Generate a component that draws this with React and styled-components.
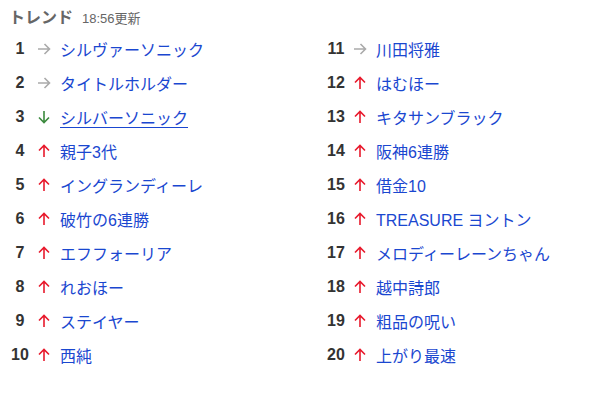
import React from 'react';
import styled, { createGlobalStyle } from 'styled-components';

const GlobalStyle = createGlobalStyle`
  body {
    margin: 0;
    background: #fff;
    font-family: "Liberation Sans", "Noto Sans CJK JP", sans-serif;
  }
`;

const Wrapper = styled.div`
  padding: 4px 8px 0;
  width: 592px;
  box-sizing: border-box;
`;

const Header = styled.div`
  display: flex;
  align-items: baseline;
  gap: 9px;
  padding-left: 1px;
  height: 22px;
`;

const Title = styled.h2`
  margin: 0;
  font-size: 16px;
  font-weight: bold;
  color: #666;
`;

const Updated = styled.span`
  font-size: 13px;
  color: #666;
`;

const Columns = styled.div`
  display: grid;
  grid-template-columns: 316px 1fr;
  margin-top: 6px;
`;

const List = styled.ol`
  list-style: none;
  margin: 0;
  padding: 0;
`;

const Row = styled.li`
  display: flex;
  align-items: center;
  height: 34px;
`;

const Rank = styled.span`
  width: 24px;
  text-align: center;
  font-size: 16px;
  font-weight: bold;
  color: #333;
`;

const ArrowCell = styled.span`
  width: 20px;
  margin-left: 2px;
  display: flex;
  justify-content: center;
  color: ${p => (p.$dir === 'up' ? '#e8192c' : p.$dir === 'down' ? '#3b8a3e' : '#aaa')};
`;

const Word = styled.a`
  margin-left: 6px;
  font-size: 16px;
  color: #1a47d0;
  text-decoration: ${p => (p.$underline ? 'underline' : 'none')};
  text-underline-offset: 3px;
`;

const Arrow = ({ dir }) => {
  const rot = dir === 'up' ? 0 : dir === 'down' ? 180 : 90;
  return (
    <svg width="12" height="14" viewBox="0 0 12 14" style={{ transform: `rotate(${rot}deg)` }}>
      <path d="M6 13V1.5M1 6.5L6 1.5L11 6.5" fill="none" stroke="currentColor" strokeWidth="1.6" />
    </svg>
  );
};

const left = [
  [1, 'right', 'シルヴァーソニック'],
  [2, 'right', 'タイトルホルダー'],
  [3, 'down', 'シルバーソニック', true],
  [4, 'up', '親子3代'],
  [5, 'up', 'イングランディーレ'],
  [6, 'up', '破竹の6連勝'],
  [7, 'up', 'エフフォーリア'],
  [8, 'up', 'れおほー'],
  [9, 'up', 'ステイヤー'],
  [10, 'up', '西純'],
];

const right = [
  [11, 'right', '川田将雅'],
  [12, 'up', 'はむほー'],
  [13, 'up', 'キタサンブラック'],
  [14, 'up', '阪神6連勝'],
  [15, 'up', '借金10'],
  [16, 'up', 'TREASURE ヨントン'],
  [17, 'up', 'メロディーレーンちゃん'],
  [18, 'up', '越中詩郎'],
  [19, 'up', '粗品の呪い'],
  [20, 'up', '上がり最速'],
];

const TrendList = ({ items }) => (
  <List>
    {items.map(([n, dir, word, u]) => (
      <Row key={n}>
        <Rank>{n}</Rank>
        <ArrowCell $dir={dir}>
          <Arrow dir={dir} />
        </ArrowCell>
        <Word href="#" $underline={u}>{word}</Word>
      </Row>
    ))}
  </List>
);

const App = () => (
  <Wrapper>
    <GlobalStyle />
    <Header>
      <Title>トレンド</Title>
      <Updated>18:56更新</Updated>
    </Header>
    <Columns>
      <TrendList items={left} />
      <TrendList items={right} />
    </Columns>
  </Wrapper>
);

export default App;
